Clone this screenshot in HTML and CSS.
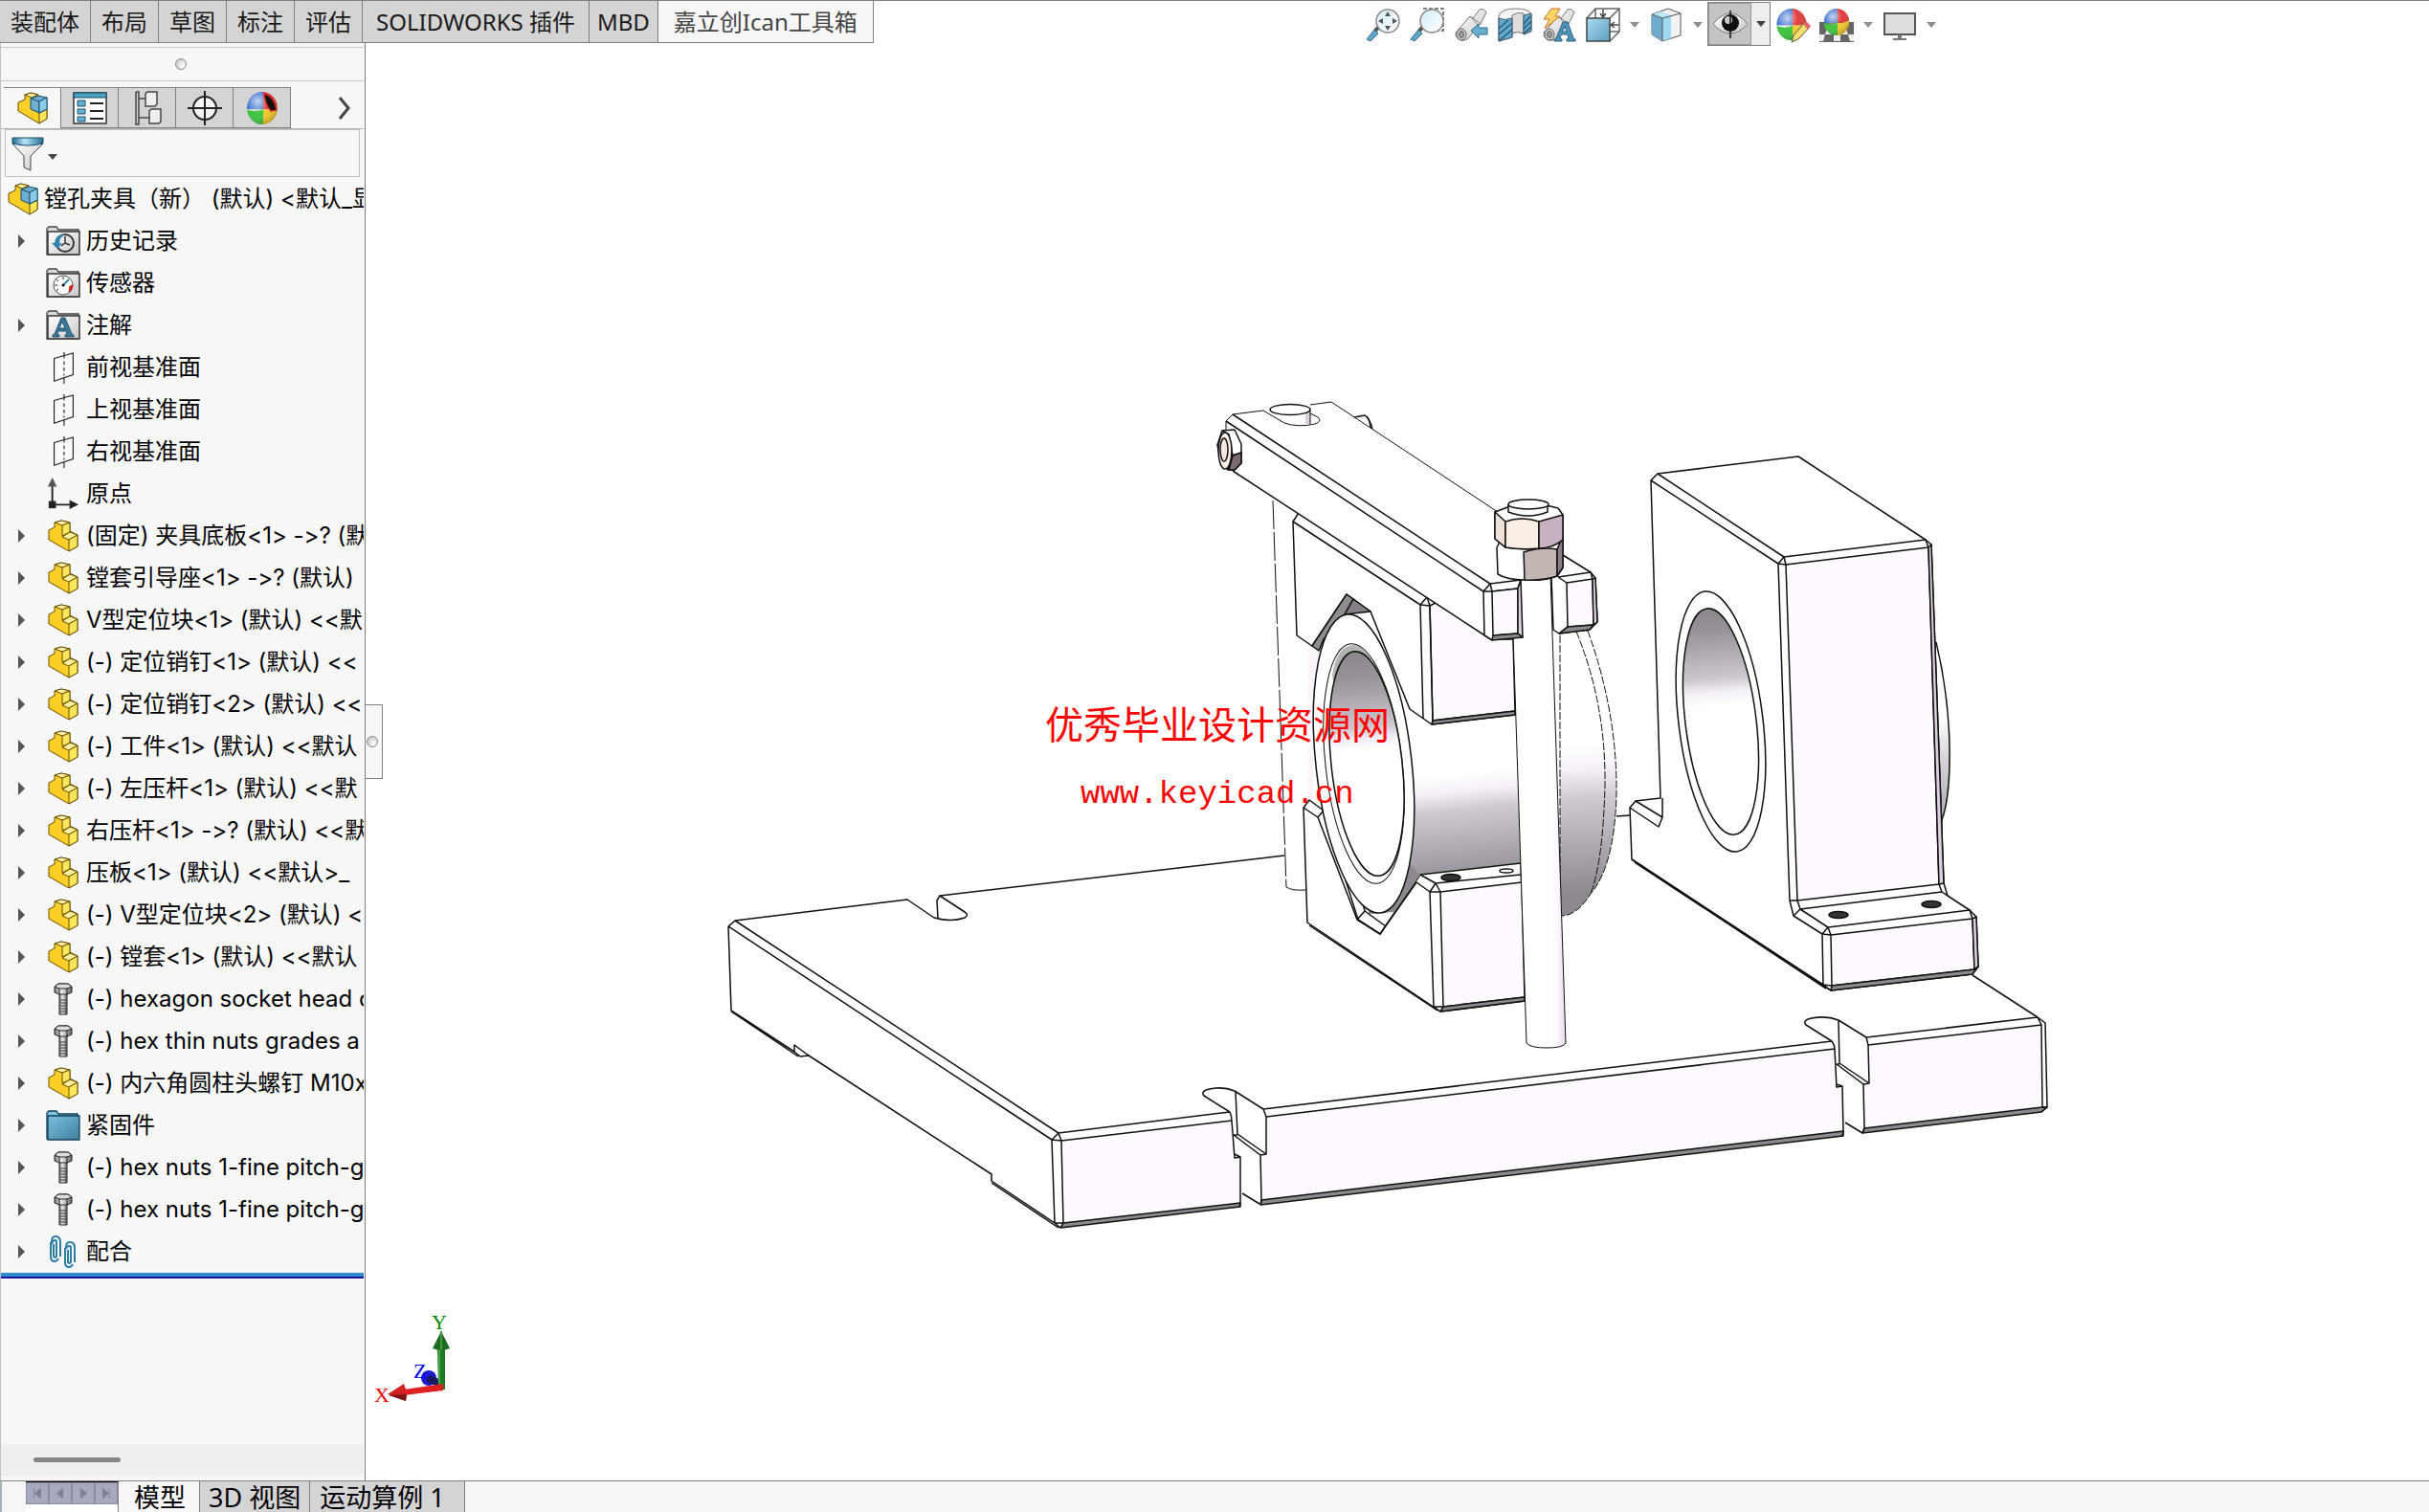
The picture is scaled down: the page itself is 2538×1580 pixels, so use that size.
FILE: index.html
```html
<!DOCTYPE html>
<html lang="zh-CN">
<head>
<meta charset="utf-8">
<title>镗孔夹具（新）</title>
<link rel="stylesheet" href="styles.css">
</head>
<body>
<svg class="defs" aria-hidden="true">
  <defs>
    <linearGradient id="gLens" x1="0" y1="0" x2="1" y2="1"><stop offset="0" stop-color="#d3ecf8"/><stop offset="1" stop-color="#fff"/></linearGradient>
    <linearGradient id="gBlue" x1="0" y1="0" x2="1" y2="1"><stop offset="0" stop-color="#aadcf2"/><stop offset="1" stop-color="#5d9dbd"/></linearGradient>
    <linearGradient id="gFolder" x1="0" y1="0" x2="1" y2="1"><stop offset="0" stop-color="#7cc0de"/><stop offset="1" stop-color="#3f7f9d"/></linearGradient>
    <linearGradient id="gGrey" x1="0" y1="0" x2="1" y2="1"><stop offset="0" stop-color="#fff"/><stop offset="1" stop-color="#c8c8c8"/></linearGradient>
    <linearGradient id="gCap"><stop offset="0" stop-color="#1f6c90"/><stop offset=".4" stop-color="#b8e6f8"/><stop offset="1" stop-color="#1f6c90"/></linearGradient>
    <linearGradient id="gSteel"><stop offset="0" stop-color="#777"/><stop offset=".4" stop-color="#eee"/><stop offset="1" stop-color="#666"/></linearGradient>
    <radialGradient id="gShine" cx=".35" cy=".3" r=".75"><stop offset="0" stop-color="#fff" stop-opacity=".7"/><stop offset=".5" stop-color="#fff" stop-opacity="0"/><stop offset="1" stop-color="#000" stop-opacity=".25"/></radialGradient>
  </defs>
  <symbol id="part" viewBox="0 0 32 34">
    <path d="M1 11 7 8V3L14 1 23 3V12L31 16V28L22 33 1 21Z" fill="#fbcf27" stroke="#6b4f00" stroke-linejoin="round"/>
    <path d="M7 3 14 1 23 3 15 6ZM15 18 23 13 31 16 22 21Z" fill="#fdf0a0" stroke="#6b4f00" stroke-linejoin="round"/>
    <path d="M15 6 23 3V13L15 17ZM22 21 31 16V28L22 33Z" fill="#fbe65c" stroke="#6b4f00" stroke-linejoin="round"/>
  </symbol>
  <symbol id="assembly" viewBox="0 0 32 34">
    <path d="M1 11 8 8V3L14 1 22 3V14L31 18V28L23 33 1 20Z" fill="#fbcf27" stroke="#6b4f00" stroke-linejoin="round"/>
    <path d="M23 22 31 18V28L23 33Z" fill="#fbe65c" stroke="#6b4f00" stroke-linejoin="round"/>
    <path d="M8 3 14 1 22 3 15 6Z" fill="#fdf0a0" stroke="#6b4f00" stroke-linejoin="round"/>
    <path d="M14 7 22 4 31 6V18L23 22 14 18Z" fill="#6faed0" stroke="#174f6b" stroke-linejoin="round"/>
    <path d="M14 7 23 10V22M23 10 31 6" fill="none" stroke="#174f6b"/>
    <path d="M23 10 31 6V18L23 22Z" fill="#8ccbe6" stroke="#174f6b"/>
  </symbol>
  <symbol id="folder" viewBox="0 0 36 32">
    <path d="M1 30V3L3 1H11L13 4H34V30Z" fill="#d9d9d9" stroke="#444" stroke-width="1.3"/>
    <path d="M2 6H35V30H2Z" fill="url(#gGrey)" stroke="#333" stroke-width="1.5"/>
  </symbol>
  <symbol id="history" viewBox="0 0 36 32"><use href="#folder"/>
    <circle cx="20" cy="18" r="9" fill="none" stroke="#333" stroke-width="2"/><path d="M20 11V18L25 20M20 18 16 21" stroke="#333" stroke-width="1.5" fill="none"/><path d="M6 18 12 24 17 18H14Q14 12 20 9 10 8 9 18Z" fill="#2f83ad"/>
  </symbol>
  <symbol id="sensor" viewBox="0 0 36 32"><use href="#folder"/>
    <circle cx="18" cy="18" r="10" fill="#fff" stroke="#555"/><path d="M18 9V12M9 18H12M11 12 13 14M11 24 13 22" stroke="#333"/><path d="M18 18 24 12" stroke="#2f83ad" stroke-width="2"/><circle cx="18" cy="18" r="1.5"/><path d="M25 19 28 18Q28 23 24 25Z" fill="#d8201c" stroke="#d8201c"/>
  </symbol>
  <symbol id="annotation" viewBox="0 0 36 32"><use href="#folder"/>
    <path d="M7 28V26L9 25 16 8H20L27 25 29 26V28H20V26L22 25 21 22H13L12 25 14 26V28ZM14 19H20L17 12Z" fill="#35789c" stroke="#17445d" stroke-width=".8"/>
  </symbol>
  <symbol id="plane" viewBox="0 0 36 36"><path d="M8 8 29 2V26L8 33Z" fill="#fafafa" stroke="#222" stroke-width="1.2"/><path d="M19 1V8M19 29V36M19 11V15M19 18V22M19 25V27" stroke="#222" stroke-width="1.2"/></symbol>
  <symbol id="origin" viewBox="0 0 36 36"><path d="M6 8V30H28" fill="none" stroke="#222" stroke-width="2"/><path d="M6 0 11 10H1Z" fill="#555"/><path d="M35 30 25 25V35Z" fill="#222"/><rect x="2" y="26" width="8" height="8" fill="#222"/></symbol>
  <symbol id="bolt" viewBox="0 0 20 34"><path d="M6 10H14V33H6Z" fill="url(#gSteel)" stroke="#222"/><path d="M7 18H13M7 21H13M7 24H13M7 27H13M7 30H13" stroke="#333"/><path d="M1 4 5 1H15L19 4V10L14 12H6L1 10Z" fill="url(#gSteel)" stroke="#222"/><path d="M1 4 5 1H15L19 4 14 6H6Z" fill="#ddd" stroke="#222"/><path d="M6 6V12M14 6V12" stroke="#222"/></symbol>
  <symbol id="fastener" viewBox="0 0 36 32"><path d="M1 30V3L3 1H11L13 4H33V30Z" fill="#7cc0de" stroke="#123f57" stroke-width="1.3"/><path d="M2 6H35V31H2Z" fill="url(#gFolder)" stroke="#123f57" stroke-width="1.3"/></symbol>
  <symbol id="mates" viewBox="0 0 30 34"><g fill="none" stroke="#2f7ea6" stroke-width="2"><path d="M5 9V21Q5 23 6.500 23 8 23 8 21V7Q8 5 6.500 5 4 5 3 9V6Q3 1 7 1 12 1 12 7V22M2 7V22Q2 27 6 27 9 27 10 24"/><path d="M20 15V27Q20 29 21.500 29 23 29 23 27V13Q23 11 21.500 11 19 11 18 14V12Q18 7 22 7 27 7 27 13V28M17 13V28Q17 33 21 33 24 33 25 30"/></g></symbol>
  <symbol id="ball" viewBox="0 0 34 36">
    <clipPath id="ballClip"><ellipse cx="17" cy="18" rx="16" ry="17"/></clipPath>
    <g clip-path="url(#ballClip)"><path d="M0 0H18V19H0Z" fill="#3f72d0"/><path d="M18 0H34V19H18Z" fill="#e03c3c"/><path d="M0 19Q8 23 18 19V36H0Z" fill="#3cc43c"/><path d="M18 19Q26 21 34 15V36H18Z" fill="#f4c92c"/></g>
    <ellipse cx="17" cy="18" rx="16" ry="17" fill="url(#gShine)"/>
  </symbol>
  <symbol id="glass" viewBox="0 0 36 36"><path d="M1 33 9 23 13 27 5 35Z" fill="#5fa5c9" stroke="#3b6f8a"/><path d="M10 24 14 20" stroke="#555" stroke-width="4"/><circle cx="23" cy="14" r="12" fill="url(#gLens)" stroke="#888" stroke-width="1.500"/></symbol>
  <symbol id="scope" viewBox="0 0 36 36"><path d="M2 26 17 9 20 11 27 2Q31 0 34 5L28 17 26 19 14 33Q9 36 5 33 1 30 2 26Z" fill="url(#gGrey)" stroke="#777"/><path d="M17 9 26 19M20 11 28 17" stroke="#888"/><ellipse cx="8" cy="28" rx="5" ry="6" fill="#ccc" stroke="#666"/><ellipse cx="8" cy="28" rx="2.500" ry="3.500" fill="#999" stroke="#666"/></symbol>
</svg>

<div class="app">
  <header class="top">
    <nav class="commands">
      <button class="command">装配体</button><button class="command">布局</button><button class="command">草图</button><button class="command">标注</button><button class="command">评估</button><button class="command wide">SOLIDWORKS 插件</button><button class="command tight">MBD</button><button class="command active">嘉立创Ican工具箱</button>
    </nav>
    <div class="viewbar">
      <button class="tool" aria-label="整屏显示全图"><svg viewBox="0 0 36 36"><use href="#glass"/><path d="M23 4 26 9H20ZM23 24 26 19H20ZM13 14 18 11V17ZM33 14 28 11V17Z" fill="#555"/></svg></button>
      <button class="tool" aria-label="局部放大"><svg viewBox="0 0 36 36"><path d="M14 1H35V24H28" fill="none" stroke="#555" stroke-width="1.500" stroke-dasharray="4 2"/><use href="#glass"/></svg></button>
      <button class="tool" aria-label="上一视图"><svg viewBox="0 0 36 36"><use href="#scope"/><path d="M18 24 26 17V21H35V28H26V32Z" fill="#6aaed0" stroke="#2f6c8b"/></svg></button>
      <button class="tool" aria-label="剖面视图"><svg viewBox="0 0 36 36"><path d="M1 9Q3 1 18 1 33 1 35 7V25L27 28V26Q20 24 15 27V31L1 35Z" fill="#f4f4f4" stroke="#777"/><path d="M15 8Q20 4 27 6V27Q20 24 15 27Z" fill="#ddd" stroke="#777"/><path d="M1 11Q7 14 15 11V31L1 35ZM27 8 35 6V24L27 28Z" fill="#62a9ce" stroke="#456"/><path d="M1 22 11 13M1 28 15 16M2 34 15 23M27 17 34 9M27 22 35 14M27 27 35 20" stroke="#245a78" stroke-width="1.500"/></svg></button>
      <button class="tool" aria-label="动态注解视图"><svg viewBox="0 0 36 36"><use href="#scope"/><path d="M10 1H19L14 9H19L3 22 8 12H2Z" fill="#fbd565" stroke="#c7702c"/><path d="M13 35V33L15 32 22 15H27L33 32 35 33V35H26V33L28 32 27 28H20L19 32 21 33V35ZM21 25H26L24 19Z" fill="#4f94ba" stroke="#29617f"/></svg></button>
      <button class="tool" aria-label="视图定向"><svg viewBox="0 0 36 36"><path d="M1 11 10 1H35V25L25 35M10 1V11M25 11 35 1M25 25H35" fill="none" stroke="#666" stroke-width="1.500"/><path d="M1 11H25V35H1Z" fill="url(#gBlue)" stroke="#444" stroke-width="1.500"/><path d="M18 2V9M15 6 18 10 21 6M34 18H27M30 15 26 18 30 21" fill="none" stroke="#444" stroke-width="1.500"/></svg></button>
      <button class="caret" aria-label="视图定向选项"></button>
      <button class="tool" aria-label="显示样式"><svg viewBox="0 0 36 36"><path d="M3 7 20 1 33 6V29L14 35 3 28Z" fill="#f2f2f2" stroke="#555"/><path d="M3 7 14 11V35L3 28Z" fill="#6eacce"/><path d="M14 11 23 8V32L14 35Z" fill="#9fdaf0"/><path d="M3 7 12 4 23 8 14 11Z" fill="#b9e5f5"/><path d="M3 7 14 11 33 6M14 11V35" fill="none" stroke="#555"/></svg></button>
      <button class="caret" aria-label="显示样式选项"></button>
      <div class="split">
        <button class="eye" aria-label="隐藏/显示项目"><svg viewBox="0 0 36 36"><path d="M0 18Q18-4 36 18 18 38 0 18Z" fill="url(#gGrey)" stroke="#777"/><circle cx="18" cy="17" r="9" fill="#111"/><circle cx="16" cy="14" r="4" fill="#ccc"/><path d="M18 4V33" stroke="#111" stroke-width="1.500"/></svg></button>
        <button class="eye-menu" aria-label="隐藏/显示选项"><span class="caret dark"></span></button>
      </div>
      <button class="tool" aria-label="编辑外观"><svg viewBox="0 0 36 36"><use href="#ball" width="34" height="35"/><path d="M17 36 19 29 31 15 36 20 24 33Z" fill="#f7df6e" stroke="#555"/><path d="M29 17 32 14 37 19 34 23Z" fill="#d66"/></svg></button>
      <button class="tool" aria-label="应用布景"><svg viewBox="0 0 36 36"><path d="M0 15H36V36H0Z" fill="#666"/><path d="M8 22H15V28H6ZM22 22H28L30 28H22ZM15 28H22V35H15ZM0 28H6L4 35H0ZM30 28H36V35H32Z" fill="#eee"/><use href="#ball" x="4" y="0" width="28" height="30"/></svg></button>
      <button class="caret" aria-label="布景选项"></button>
      <button class="tool" aria-label="视图设定"><svg viewBox="0 0 36 36"><rect x="2" y="6" width="32" height="22" fill="#ddd" stroke="#555" stroke-width="2"/><path d="M16 28H20V32H25V34H11V32H16Z" fill="#777"/></svg></button>
      <button class="caret" aria-label="视图设定选项"></button>
    </div>
  </header>

  <main class="work">
    <aside class="panel">
      <div class="grip"><span class="knob"></span></div>
      <div class="managers">
        <button class="manager active" aria-label="设计树"><svg width="32" height="36"><use href="#assembly"/></svg></button>
        <button class="manager" aria-label="属性"><svg width="36" height="36" viewBox="0 0 36 36"><path d="M1 2H35V34H1Z" fill="#fff" stroke="#333" stroke-width="1.500"/><path d="M1 2H35V7H1Z" fill="#4d9fc4" stroke="#1d4f69"/><path d="M5 10H13V16H5ZM5 19H13V24H5ZM5 27H13V32H5Z" fill="#64b1d4" stroke="#1d4f69"/><path d="M18 13H32M18 21H32M18 29H32" stroke="#222" stroke-width="2"/></svg></button>
        <button class="manager" aria-label="配置"><svg width="36" height="36" viewBox="0 0 36 36"><path d="M6 1H9V8H17M6 1V35H9V28H20M9 8V28" fill="none" stroke="#444" stroke-width="1.500"/><path d="M16 3 18 1H28V14L26 16H16ZM20 21 22 19H32V32L30 34H20Z" fill="#eee" stroke="#444" stroke-width="1.500"/></svg></button>
        <button class="manager" aria-label="尺寸"><svg width="36" height="36" viewBox="0 0 36 36"><circle cx="18" cy="18" r="12" fill="#f4f4f4" stroke="#222" stroke-width="2"/><path d="M18 0V36M0 18H36" stroke="#222" stroke-width="2"/></svg></button>
        <button class="manager" aria-label="外观"><svg width="36" height="36" viewBox="0 0 36 36"><use href="#ball" width="36" height="36"/><path d="M20 3Q30 5 33 20L27 21Q21 14 20 3Z" fill="#111" stroke="#c22" stroke-width="1.500"/></svg></button>
        <button class="more" aria-label="更多"><svg width="16" height="26" viewBox="0 0 16 26"><path d="M3 2 12 13 3 24" fill="none" stroke="#444" stroke-width="3"/></svg></button>
      </div>
      <div class="filter">
        <button class="funnel" aria-label="过滤"><svg width="34" height="36" viewBox="0 0 34 36"><path d="M1 7 13 20V32L20 35V20L33 7Z" fill="url(#gGrey)" stroke="#444"/><path d="M1 1H33V7Q17 11 1 7Z" fill="url(#gCap)" stroke="#174f6b"/></svg><span class="caret dark"></span></button>
      </div>
      <ul class="tree">
        <li class="root"><svg class="ico"><use href="#assembly"/></svg>镗孔夹具（新） (默认) &lt;默认_显</li>
        <li><i class="arrow"></i><svg class="ico"><use href="#history"/></svg>历史记录</li>
        <li><i></i><svg class="ico"><use href="#sensor"/></svg>传感器</li>
        <li><i class="arrow"></i><svg class="ico"><use href="#annotation"/></svg>注解</li>
        <li><i></i><svg class="ico"><use href="#plane"/></svg>前视基准面</li>
        <li><i></i><svg class="ico"><use href="#plane"/></svg>上视基准面</li>
        <li><i></i><svg class="ico"><use href="#plane"/></svg>右视基准面</li>
        <li><i></i><svg class="ico"><use href="#origin"/></svg>原点</li>
        <li><i class="arrow"></i><svg class="ico"><use href="#part"/></svg>(固定) 夹具底板&lt;1&gt; -&gt;? (默</li>
        <li><i class="arrow"></i><svg class="ico"><use href="#part"/></svg>镗套引导座&lt;1&gt; -&gt;? (默认)</li>
        <li><i class="arrow"></i><svg class="ico"><use href="#part"/></svg>V型定位块&lt;1&gt; (默认) &lt;&lt;默</li>
        <li><i class="arrow"></i><svg class="ico"><use href="#part"/></svg>(-) 定位销钉&lt;1&gt; (默认) &lt;&lt;</li>
        <li><i class="arrow"></i><svg class="ico"><use href="#part"/></svg>(-) 定位销钉&lt;2&gt; (默认) &lt;&lt;</li>
        <li><i class="arrow"></i><svg class="ico"><use href="#part"/></svg>(-) 工件&lt;1&gt; (默认) &lt;&lt;默认</li>
        <li><i class="arrow"></i><svg class="ico"><use href="#part"/></svg>(-) 左压杆&lt;1&gt; (默认) &lt;&lt;默</li>
        <li><i class="arrow"></i><svg class="ico"><use href="#part"/></svg>右压杆&lt;1&gt; -&gt;? (默认) &lt;&lt;默</li>
        <li><i class="arrow"></i><svg class="ico"><use href="#part"/></svg>压板&lt;1&gt; (默认) &lt;&lt;默认&gt;_</li>
        <li><i class="arrow"></i><svg class="ico"><use href="#part"/></svg>(-) V型定位块&lt;2&gt; (默认) &lt;</li>
        <li><i class="arrow"></i><svg class="ico"><use href="#part"/></svg>(-) 镗套&lt;1&gt; (默认) &lt;&lt;默认</li>
        <li><i class="arrow"></i><svg class="ico"><use href="#bolt"/></svg>(-) hexagon socket head c</li>
        <li><i class="arrow"></i><svg class="ico"><use href="#bolt"/></svg>(-) hex thin nuts grades a</li>
        <li><i class="arrow"></i><svg class="ico"><use href="#part"/></svg>(-) 内六角圆柱头螺钉 M10x</li>
        <li><i class="arrow"></i><svg class="ico"><use href="#fastener"/></svg>紧固件</li>
        <li><i class="arrow"></i><svg class="ico"><use href="#bolt"/></svg>(-) hex nuts 1-fine pitch-g</li>
        <li><i class="arrow"></i><svg class="ico"><use href="#bolt"/></svg>(-) hex nuts 1-fine pitch-g</li>
        <li><i class="arrow"></i><svg class="ico"><use href="#mates"/></svg>配合</li>
      </ul>
      <div class="rollback"></div>
      <div class="hscroll"><span class="thumb"></span></div>
    </aside>

    <section class="viewport">
      <button class="handle" aria-label="折叠面板"><span class="knob"></span></button>
      <svg class="scene" viewBox="382 45 2156 1502" preserveAspectRatio="xMidYMid meet">
        <defs>
          <linearGradient id="bore1" gradientUnits="userSpaceOnUse" gradientTransform="rotate(-83.6 1428 798)" x1="1410" y1="685" x2="1418" y2="785"><stop offset="0" stop-color="#8d878e"/><stop offset=".25" stop-color="#989299"/><stop offset=".75" stop-color="#ccc7ce"/><stop offset=".88" stop-color="#f4eff7"/><stop offset="1" stop-color="#fff"/></linearGradient>
          <linearGradient id="bore2" gradientUnits="userSpaceOnUse" gradientTransform="rotate(-83 1798 754)" x1="1785" y1="640" x2="1793" y2="738"><stop offset="0" stop-color="#8d878e"/><stop offset=".2" stop-color="#989299"/><stop offset=".7" stop-color="#ccc7ce"/><stop offset=".85" stop-color="#f4eff7"/><stop offset="1" stop-color="#fff"/></linearGradient>
          <linearGradient id="shaft" gradientUnits="userSpaceOnUse" x1="1530" y1="808" x2="1542" y2="925"><stop offset="0" stop-color="#fff"/><stop offset=".15" stop-color="#f6f0f9"/><stop offset=".32" stop-color="#cfcad1"/><stop offset=".7" stop-color="#aba6ad"/><stop offset="1" stop-color="#8d878e"/></linearGradient>
          <linearGradient id="disc" gradientUnits="userSpaceOnUse" x1="1650" y1="780" x2="1656" y2="935"><stop offset="0" stop-color="#fff"/><stop offset=".15" stop-color="#f6f0f9"/><stop offset=".35" stop-color="#cfcad1"/><stop offset=".7" stop-color="#aba6ad"/><stop offset="1" stop-color="#8d878e"/></linearGradient>
          <linearGradient id="bulge" gradientUnits="userSpaceOnUse" x1="2030" y1="750" x2="2034" y2="870"><stop offset="0" stop-color="#fff"/><stop offset=".35" stop-color="#d8d3da"/><stop offset="1" stop-color="#a8a3aa"/></linearGradient>
          <linearGradient id="pin"><stop offset="0" stop-color="#fff"/><stop offset=".7" stop-color="#fff"/><stop offset=".85" stop-color="#fdf7ff"/><stop offset="1" stop-color="#e6d9ea"/></linearGradient>
        </defs>
        <g class="edges">
          <!-- base plate -->
          <path class="f" d="M768 962 948 940 978 960Q994 964 1008 958L982 936 1400 880 1703 851 2062 1019 2129 1063 1950 1084 1921 1066 1886 1070 1914 1088 1320 1159 1290 1140 1257 1144 1285 1162 1106 1184Z" stroke="none"/>
          <path class="p" stroke="none" d="M1109 1192 1287 1171 1290 1210H1296V1257L1111 1278ZM1323 1167 1917 1096 1919 1136H1926V1182L1318 1254V1207H1323ZM1952 1092 2133 1071 2134 1157 1948 1179 1947 1133H1953Z"/>
          <path class="d" d="M1111 1278 1296 1257V1261L1108 1283ZM1318 1254 1926 1182V1187L1317 1259ZM1948 1179 2134 1157 2139 1157 2133 1162 1946 1184Z"/>
          <path d="M761 968 768 962 948 940 976 959Q994 964 1008 959 1013 956 1008 953L982 936 1342 894M982 936 979 941 980 960M1689 853 1703 852M768 962 1106 1184 1285 1162M761 968 1099 1191 1109 1192 1287 1171M1099 1191 1106 1184 1109 1192 1111 1278M761 968 764 1056 830 1099 836 1104 845 1103M764 1057 834 1104M830 1099V1092L845 1103 1036 1227V1234L1102 1278 1108 1283M1036 1236 1106 1283M1099 1191 1102 1278 1111 1278"/>
          <path d="M1285 1162 1258 1145Q1254 1140 1264 1138 1278 1135 1290 1140L1320 1159 1323 1167V1206L1317 1207 1318 1254 1317 1259M1285 1162Q1287 1166 1287 1171L1290 1210 1296 1209V1257L1295 1261M1290 1206 1296 1209M1291 1141 1293 1185M1289 1186 1317 1207M1293 1185 1323 1206M1289 1186H1293M1298 1247 1316 1258"/>
          <path d="M1320 1159 1914 1088M1323 1167 1917 1096M1914 1088 1887 1071Q1883 1066 1893 1064 1908 1061 1921 1066L1950 1084 1952 1092 1953 1132 1947 1133 1948 1179 1946 1184M1914 1088Q1917 1092 1917 1096L1919 1136 1925 1135 1926 1182 1925 1187M1919 1133 1925 1135M1921 1066 1922 1111M1919 1112 1947 1133M1922 1111 1953 1132M1919 1112H1922M1928 1173 1946 1184M1950 1084 2129 1063M1952 1092 2133 1071M2061 1019 2129 1063 2137 1069 2139 1157 2133 1162M2129 1063 2133 1071 2134 1157 2139 1157"/>

          <!-- guide bush and bracket on the right -->
          <path d="M2023 671Q2036 725 2037 780T2028 860" fill="url(#bulge)" stroke-width="1"/>
          <path class="f" d="M1732 495 1879 477 2012 564 2018 569 2031 923 2035 936 2058 951 2065 958 2067 1010 2061 1018 1913 1035 1705 898 1703 844 1709 837 1735 834 1725 502Z"/>
          <path class="p" d="M1866 590 2015 572 2026 924 1878 941ZM1913 977 2061 960 2063 1013 1914 1030Z"/>
          <path class="v" d="M2015 572 2018 569 2031 923 2026 924ZM2061 960 2065 958 2067 1010 2063 1013Z"/>
          <path class="d" d="M1914 1030 2063 1013 2067 1010 2061 1018 1913 1035Z"/>
          <path d="M1732 495 1864 582 1858 589 1725 502M1864 582 1866 590 1858 589 1870 941 1874 957 1904 976 1905 1029 1914 1030M1864 582 2012 564 2015 572M1870 941H1878L1881 950 1910 969 1904 976 1913 977M1874 957 1881 950 2029 932 2026 924M2029 932 2035 936M1910 969 1913 977M1910 969 2058 951 2061 960M1737 834V854L1733 864 1703 844M1709 837 1737 854M1705 898 1905 1029 1913 1035M1708 901 1908 1033"/>
          <ellipse cx="1798" cy="754" rx="137" ry="44" transform="rotate(83 1798 754)" stroke-width="1.200"/>
          <ellipse cx="1798" cy="754" rx="119" ry="37" transform="rotate(83 1798 754)" fill="url(#bore2)"/>
          <path class="hole" d="M1911 956a10 3.500 0 1 0 20 0a10 3.500 0 1 0-20 0M2008 945a10 3.500 0 1 0 20 0a10 3.500 0 1 0-20 0"/>

          <!-- rear pin -->
          <path class="f thin" d="M1330 520 1344 927Q1350 931 1364 930L1390 920 1378 520Z" stroke="none"/>
          <path class="thin" stroke-dasharray="30 3" d="M1330 523 1344 927Q1350 931 1364 930"/>
          <path d="M1366 665 1378 680 1372 790V835H1366Z" fill="#faf5fc" stroke="none"/>

          <!-- flanged workpiece -->
          <path class="thin" fill="url(#disc)" stroke-dasharray="8 2" d="M1659 659Q1690 745 1689 830 1687 905 1662 934Q1647 958 1630 957V659Z"/>
          <path class="thin" stroke-dasharray="8 2" d="M1647 660Q1678 735 1677 820 1675 900 1662 934"/>
          <path stroke="none" fill="url(#shaft)" d="M1440 640H1592V903L1485 914 1457 953 1430 955Z"/>

          <!-- upper V block -->
          <path class="f" d="M1357 536 1580 660 1583 747 1496 757 1473 741 1432 639 1407 621 1371 675 1355 664 1351 545Z"/>
          <path class="p" d="M1494 633 1500 630 1560 668H1581L1583 743 1497 753Z"/>
          <path class="d" d="M1497 753 1583 743V747L1496 757Z"/>
          <path d="M1357 536 1491 624 1484 632 1351 545M1491 624 1494 633 1484 632 1487 751M1494 633 1497 753 1496 757"/>
          <path d="M1407 621 1414 626 1405 642 1383 668 1378 680 1371 675Z" fill="#8e8e8e"/>
          <path d="M1414 626 1432 639 1405 642Z" fill="#857f87"/>

          <!-- lower V block -->
          <path class="f" d="M1368 836 1383 847 1419 961 1442 976 1484 914 1589 902 1593 1046 1505 1057 1366 964 1362 844Z"/>
          <path class="p" d="M1505 932 1590 922 1593 1042 1508 1052Z"/>
          <path class="d" d="M1508 1052 1593 1042V1046L1505 1057Z"/>
          <path d="M1362 844 1377 854 1383 847M1377 854 1418 961 1426 952 1448 968M1418 961 1442 976 1480 922 1494 932 1500 923 1484 914M1500 923 1589 914M1500 923 1505 932 1494 932 1498 1052 1505 1057M1498 1052H1508M1368 967 1502 1056M1426 952 1423 940"/>
          <path stroke="none" fill="#8d878e" d="M1484 914 1457 953H1445L1470 900Z"/>
          <path class="hole" d="M1506 917a10 3.500 0 1 0 20 0a10 3.500 0 1 0-20 0"/><ellipse cx="1574" cy="910" rx="7" ry="2"/>
          <ellipse class="f" cx="1425" cy="798" rx="157" ry="50" transform="rotate(83.600 1425 798)"/>
          <ellipse class="thin" cx="1425" cy="798" rx="126" ry="40" transform="rotate(83.600 1425 798)"/>
          <path d="M1392 706Q1396 676 1413 674 1424 674 1434 690L1418 680Q1402 682 1395 720Z" fill="#b4b4b4" stroke="none"/>
          <ellipse cx="1428" cy="798" rx="118" ry="37" transform="rotate(83.600 1428 798)" fill="url(#bore1)"/>

          <!-- front pin -->
          <path class="thin" fill="url(#pin)" d="M1579 600H1620L1636 1090Q1633 1095 1616 1095T1595 1090Z"/>

          <!-- clamp bar -->
          <path d="M1415 436 1426 434Q1432 438 1434 449" class="f"/><path d="M1428 435Q1432 440 1432 448"/>
          <path class="f" stroke="none" d="M1288 433 1391 420 1565 535 1589 606 1591 666 1559 669 1288 492 1281 449V440Z"/>
          <path d="M1281 449V440L1288 433 1320 429M1369 423 1391 420 1565 535" class="thin"/>
          <path d="M1288 433 1557 610 1550 618 1281 440M1557 610 1559 618 1550 618 1551 664 1559 669M1288 492 1559 669M1557 610 1589 606 1586 615 1559 618"/>
          <path class="p" d="M1559 618 1586 615V662L1560 664Z"/><path class="v" d="M1586 615 1589 606 1591 666 1586 662Z"/><path class="d" d="M1560 664 1586 662 1591 666 1559 669Z"/>
          <path class="thin" d="M1320 429 1342 442Q1356 447 1374 443 1382 440 1377 436L1369 432"/>
          <path class="v" stroke="none" d="M1364 430 1369 428V443H1364Z"/><path class="thin" d="M1369 428V443"/>
          <ellipse class="f" cx="1348" cy="428" rx="21" ry="5.500"/>
          <path class="f" d="M1633 580 1662 598 1667 604 1669 650 1661 658 1629 662 1623 658 1621 603Z"/>
          <path class="p" d="M1637 609 1664 605 1665 653 1638 655Z"/><path class="v" d="M1664 605 1667 604 1669 650 1665 653Z"/><path class="d" d="M1638 655 1665 653 1661 658 1629 662Z"/>
          <path d="M1628 603 1637 609M1628 603 1662 598 1664 605M1629 662 1638 655"/>

          <!-- nuts -->
          <path class="f" d="M1564 572 1565 600Q1575 606 1593 606 1615 607 1627 602L1633 593V560H1570Z"/>
          <path d="M1592 577Q1610 571 1627 574V602Q1612 607 1593 606Z" fill="#c2b6b2"/><path d="M1627 574 1633 560V593L1627 602Z" fill="#8c7a84"/>
          <path class="f" d="M1562 535 1578 529Q1597 524 1620 529L1628 531 1633 538V564Q1622 573 1608 573 1590 575 1573 572L1562 563Z"/>
          <path d="M1562 535 1573 545V572L1562 563Z" fill="#efe2da"/><path d="M1573 545Q1590 539 1608 545V573Q1590 575 1573 572Z" fill="#fbeee4"/><path d="M1608 545 1633 538V564Q1622 573 1608 573Z" fill="#c8b1c0"/>
          <path class="f" d="M1576 527V535Q1597 543 1617 535V527"/><ellipse class="f" cx="1597" cy="527" rx="21" ry="5"/>
          <path class="f" d="M1272 465 1277 450 1290 449 1297 464V484L1290 491H1283L1275 480Z"/><path d="M1277 450 1284 454 1288 476 1283 491M1288 476 1297 473"/>
          <path d="M1288 476 1297 473V484L1290 491H1284Z" fill="#7a6a6e"/><ellipse cx="1280" cy="471" rx="7" ry="19" fill="#fbeee4"/><ellipse cx="1279" cy="470" rx="4" ry="12" fill="#f6e8e0" stroke-width="2"/>
        </g>
        <g class="watermark"><text x="1092" y="772" class="wm-cjk">优秀毕业设计资源网</text><text x="1129" y="839" class="wm-url">www.keyicad.cn</text></g>
        <!-- orientation triad -->
        <circle cx="448" cy="1440" r="8" fill="#1a1ad0"/><path d="M447 1440 462 1447" stroke="#1a1a60" stroke-width="8"/>
        <path d="M457 1409H465V1452H458Z" fill="#1e7a22"/><path d="M459 1409V1446" stroke="#45a347" stroke-width="2"/><path d="M461 1391 470 1409Q461 1413 452 1409Z" fill="#1c6b20"/><path d="M461 1391V1411" stroke="#3f9a3f" stroke-width="2"/>
        <path d="M422 1452 463 1446V1453L422 1458Z" fill="#e02020"/><path d="M405 1457 422 1446 425 1455 424 1464Z" fill="#d42020"/><path d="M406 1458 425 1457 424 1464Z" fill="#7c1414"/>
        <text class="axis ax-y" x="451" y="1389">Y</text><text class="axis ax-z" x="432" y="1440">Z</text><text class="axis ax-x" x="391" y="1465">X</text>
      </svg>
    </section>
  </main>

  <footer class="bottom">
    <div class="pager">
      <button aria-label="第一页"><svg viewBox="0 0 24 24"><path d="M8 6V18M16 6V18L9 12Z"/></svg></button><button aria-label="上一页"><svg viewBox="0 0 24 24"><path d="M15 6V18L8 12Z"/></svg></button><button aria-label="下一页"><svg viewBox="0 0 24 24"><path d="M9 6V18L16 12Z"/></svg></button><button aria-label="最后一页"><svg viewBox="0 0 24 24"><path d="M16 6V18M8 6V18L15 12Z"/></svg></button>
    </div>
    <button class="sheet active">模型</button><button class="sheet">3D 视图</button><button class="sheet last">运动算例 1</button>
  </footer>
</div>
</body>
</html>
```
FILE: styles.css
```css
* { box-sizing: border-box; }
body { margin: 0; background: #fff; color: #000; font: 24px/32px "Noto Sans", "Noto Sans CJK SC", sans-serif; }
button { margin: 0; padding: 0; border: 0; background: none; color: inherit; font: inherit; }
.defs { position: absolute; width: 0; height: 0; }
.app { display: flex; flex-direction: column; min-height: 100vh; }

.top { display: flex; height: 45px; border-top: 1px solid #808080; }
.commands { display: flex; border-bottom: 1px solid #808080; }
.command { padding: 0 11px; background: #d4d4d4; border-right: 1px solid #808080; color: #1a1a1a; white-space: nowrap; }
.command.wide { padding: 0 14px; }
.command.tight { padding: 0 8px; }
.command.active { padding: 0 16px; background: #f7f7f7; color: #444; }
.viewbar { flex: 1; display: flex; align-items: center; justify-content: center; gap: 10px; padding-top: 6px; }
.tool, .tool svg { display: block; width: 36px; height: 36px; overflow: visible; }
.caret { width: 0; height: 0; border: 5px solid transparent; border-top: 6px solid #8f8f8f; border-bottom: 0; }
.caret.dark { border-top-color: #444; }
.split { display: flex; width: 66px; height: 46px; margin: -3px -5px 0; border: 1px solid #808080; }
.eye { flex: 1; background: #c4c4c4; border: 1px solid #999; }
.eye svg { display: block; width: 36px; height: 36px; margin: 0 auto; }
.eye-menu { width: 19px; display: flex; align-items: center; justify-content: center; background: #eee; }

.work { flex: 1; display: flex; }
.panel { display: flex; flex-direction: column; width: 382px; background: #f7f7f7; border-left: 1px solid #c0c0c0; border-right: 1px solid #808080; padding-right: 1px; }
.grip { display: flex; align-items: center; justify-content: center; height: 36px; margin-top: 4px; padding-right: 4px; border-top: 1px solid #c8c8c8; border-bottom: 1px solid #c8c8c8; }
.knob { width: 12px; height: 12px; border: 1px solid #8a8a8a; border-radius: 50%; background: radial-gradient(circle at 70% 70%, #fff, #bbb); }
.managers { display: flex; height: 44px; margin-top: 6px; padding-left: 3px; border-bottom: 1px solid #b0b0b0; }
.manager { display: flex; align-items: center; justify-content: center; width: 60px; background: #d4d4d4; border-top: 1px solid #808080; border-right: 1px solid #808080; border-bottom: 1px solid #808080; }
.manager.active { background: #f7f7f7; border-bottom: 0; }
.more { margin: 0 12px 0 auto; }
.more svg { display: block; }
.filter { height: 50px; margin: 0 4px 1px; padding: 7px 6px; border: 1px solid #c0c0c0; }
.funnel { display: flex; align-items: center; gap: 4px; }
.funnel .caret { margin-top: 6px; }
.tree { list-style: none; margin: 0; padding: 0; overflow: hidden; font-family: Inter, "Noto Sans CJK SC", sans-serif; font-variant-ligatures: none; font-feature-settings: "calt" 0; }
.tree li { display: flex; align-items: center; height: 44px; padding-left: 18px; white-space: nowrap; overflow: hidden; }
.tree li.root { padding-left: 7px; }
.tree i { flex: none; width: 7px; margin-right: 22px; }
.tree .arrow { height: 14px; background: #555; clip-path: polygon(0 0, 100% 50%, 0 100%); }
.ico { flex: none; width: 36px; height: 34px; margin-right: 6px; }
.root .ico { width: 32px; margin-right: 6px; }
.rollback { height: 6px; background: #2f8bc9; border-bottom: 2px solid #1414a0; }
.hscroll { margin-top: auto; margin-bottom: 5px; height: 33px; padding: 14px 34px; background: #efefef; }
.thumb { display: block; width: 91px; height: 5px; border-radius: 3px; background: #868686; }

.viewport { position: relative; flex: 1; min-width: 0; display: flex; }
.scene { flex: 1; min-width: 0; display: block; }
.handle { position: absolute; left: 0; top: 46%; display: flex; align-items: center; width: 18px; height: 78px; padding-left: 1px; background: #f7f7f7; border: 1px solid #808080; border-left: 0; }
.edges path, .edges ellipse { fill: none; stroke: #111; stroke-width: 1.5; stroke-linejoin: round; }
.edges [fill] { fill: revert-layer; }
.edges .f { fill: #fff; }
.edges .p { fill: #fdf9ff; }
.edges .v { fill: #dccfe0; }
.edges .d { fill: #8d878e; }
.edges .hole { fill: #333; }
.edges .thin { stroke-width: 1; }
.edges path[stroke="none"] { stroke: none; }
.watermark { fill: #f00; }
.wm-cjk { font: 40px "Noto Sans CJK SC", sans-serif; }
.wm-url { font: 34px "Liberation Mono", monospace; }
.axis { font: 22px "Liberation Serif", serif; }
.ax-x { fill: #e00; }
.ax-y { fill: #080; }
.ax-z { fill: #00e; }

.bottom { display: flex; height: 33px; padding-left: 25px; background: #f7f7f7; border-top: 1px solid #808080; border-left: 2px solid #9fb4ba; font-size: 27px; line-height: 30px; }
.pager { display: flex; align-items: flex-start; background: #fff; border-right: 1px solid #808080; border-top: 1px solid #000; }
.pager button { width: 24px; height: 23px; background: #a6a9c0; border: 1px solid #8a8ca2; }
.pager svg { display: block; width: 22px; height: 21px; fill: #7e8099; stroke: #7e8099; }
.sheet { padding: 2px 9px 0; background: #d4d4d4; border-right: 1px solid #808080; white-space: nowrap; }
.sheet.active { padding: 2px 14px 0 16px; background: #f7f7f7; }
.sheet.last { padding: 2px 20px 0 10px; }
```
